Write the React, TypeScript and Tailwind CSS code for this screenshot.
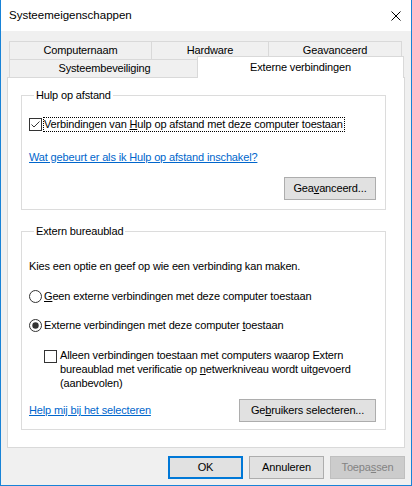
import React from "react";

function CheckBox({ checked }: { checked?: boolean }) {
  return (
    <svg width="13" height="13" viewBox="0 0 13 13" className="shrink-0 block">
      <rect x="0.5" y="0.5" width="12" height="12" fill="#ffffff" stroke="#333333" />
      {checked && (
        <path d="M2.5 6.5 L5 9 L10.5 3.5" fill="none" stroke="#333333" strokeWidth="1" />
      )}
    </svg>
  );
}

function Radio({ checked }: { checked?: boolean }) {
  return (
    <svg width="13" height="13" viewBox="0 0 13 13" className="shrink-0 block">
      <circle cx="6.5" cy="6.5" r="6" fill="#ffffff" stroke="#333333" />
      {checked && <circle cx="6.5" cy="6.5" r="3.2" fill="#333333" />}
    </svg>
  );
}

export default function App() {
  return (
    <div className="w-[412px] h-[486px] flex flex-col border-x border-b border-[#1883d7] bg-[#f0f0f0] font-['Liberation_Sans',Arial,sans-serif] text-[11px] tracking-[-0.15px] text-black overflow-hidden">
      {/* Title bar */}
      <div className="h-[31px] shrink-0 bg-white flex items-center pl-[8px] pr-[10px]">
        <span className="text-[11.5px] tracking-normal">Systeemeigenschappen</span>
        <svg width="10" height="10" viewBox="0 0 10 10" className="ml-auto block">
          <path d="M0.5 0.5 L9.5 9.5 M9.5 0.5 L0.5 9.5" stroke="#000000" strokeWidth="1" fill="none" />
        </svg>
      </div>

      {/* Body */}
      <div className="flex-1 flex flex-col px-[6px] pt-[10px]">
        {/* Tabs */}
        <div className="flex flex-col pl-[2px]">
          <div className="flex h-[18px]">
            <div className="w-[142px] border-l border-t border-[#d9d9d9] bg-[#f0f0f0] flex items-center justify-center">
              Computernaam
            </div>
            <div className="w-[117px] border-l border-t border-[#d9d9d9] bg-[#f0f0f0] flex items-center justify-center">
              Hardware
            </div>
            <div className="w-[134px] border-l border-t border-r border-[#d9d9d9] bg-[#f0f0f0] flex items-center justify-center">
              Geavanceerd
            </div>
          </div>
          <div className="flex h-[18px] items-end">
            <div className="w-[191px] h-[18px] border-l border-t border-r border-[#d9d9d9] bg-[#f0f0f0] flex items-center justify-center">
              Systeembeveiliging
            </div>
            <div className="relative z-10 -ml-[3px] -mb-px w-[207px] h-[22px] border-l border-t border-r border-[#d9d9d9] bg-white flex items-center justify-center pb-[1px]">
              Externe verbindingen
            </div>
          </div>
        </div>

        {/* Panel */}
        <div className="h-[371px] border border-[#d9d9d9] bg-white flex flex-col">
          <fieldset className="ml-[13px] mt-[10px] w-[365px] border border-[#dcdcdc] pl-[7px] pr-[9px] pb-[9px] flex flex-col">
            <legend className="ml-[5px] px-[2px] leading-[15px]">Hulp op afstand</legend>
            <div className="mt-[14px] h-[15px] flex items-center">
              <CheckBox checked />
              <span className="ml-[1px] border border-dotted border-black leading-[13px] pr-[1px]">
                Verbindingen van <span className="underline">H</span>ulp op afstand met deze computer toestaan
              </span>
            </div>
            <div className="mt-[18px] leading-[15px]">
              <span className="text-[#0066cc] underline">Wat gebeurt er als ik Hulp op afstand inschakel?</span>
            </div>
            <div className="mt-[12px] flex justify-end">
              <div className="w-[92px] h-[23px] border border-[#adadad] bg-[#e1e1e1] flex items-center justify-center">
                <span>
                  Gea<span className="underline">v</span>anceerd...
                </span>
              </div>
            </div>
          </fieldset>

          <fieldset className="ml-[13px] mt-[14px] w-[365px] border border-[#dcdcdc] pl-[7px] pr-[9px] pb-[7px] flex flex-col">
            <legend className="ml-[5px] px-[2px] leading-[15px]">Extern bureaublad</legend>
            <div className="mt-[20px] leading-[15px]">Kies een optie en geef op wie een verbinding kan maken.</div>
            <div className="mt-[15px] h-[15px] flex items-center gap-[2px]">
              <Radio />
              <span>
                <span className="underline">G</span>een externe verbindingen met deze computer toestaan
              </span>
            </div>
            <div className="mt-[14px] h-[15px] flex items-center gap-[2px]">
              <Radio checked />
              <span>
                Externe verbindingen met deze computer <span className="underline">t</span>oestaan
              </span>
            </div>
            <div className="mt-[15px] pl-[15px] flex items-start gap-[3px]">
              <div className="mt-[2px]">
                <CheckBox />
              </div>
              <div className="leading-[14px]">
                Alleen verbindingen toestaan met computers waarop Extern
                <br />
                bureaublad met verificatie op <span className="underline">n</span>etwerkniveau wordt uitgevoerd
                <br />
                (aanbevolen)
              </div>
            </div>
            <div className="mt-[9px] h-[23px] flex items-center justify-between">
              <span className="text-[#0066cc] underline">Help mij bij het selecteren</span>
              <div className="w-[137px] h-[23px] border border-[#adadad] bg-[#e1e1e1] flex items-center justify-center">
                <span>
                  Ge<span className="underline">b</span>ruikers selecteren...
                </span>
              </div>
            </div>
          </fieldset>
        </div>

        {/* Dialog buttons */}
        <div className="mt-[8px] flex justify-end gap-[6px]">
          <div className="w-[75px] h-[23px] border-2 border-[#0078d7] bg-[#e1e1e1] flex items-center justify-center">
            OK
          </div>
          <div className="w-[75px] h-[23px] border border-[#adadad] bg-[#e1e1e1] flex items-center justify-center">
            Annuleren
          </div>
          <div className="w-[75px] h-[23px] border border-[#bfbfbf] bg-[#cccccc] text-[#838383] flex items-center justify-center">
            <span>
              Toepa<span className="underline">s</span>sen
            </span>
          </div>
        </div>
      </div>
    </div>
  );
}
